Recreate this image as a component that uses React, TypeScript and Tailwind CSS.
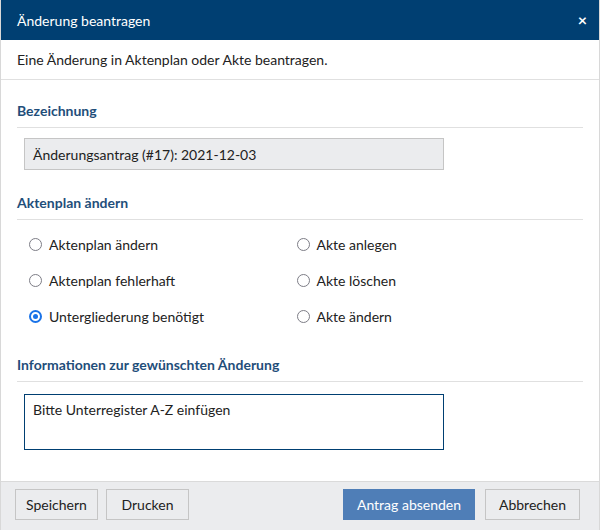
import React from "react";

const font = { fontFamily: "Lato, 'Open Sans', sans-serif" };

function Radio({ label, checked }: { label: string; checked?: boolean }) {
  return (
    <div className="flex items-center h-[20px] gap-[7px]">
      {checked ? (
        <span className="w-[13px] h-[13px] rounded-full border-[2px] border-[#1a73e8] flex items-center justify-center">
          <span className="w-[5px] h-[5px] rounded-full bg-[#1a73e8]" />
        </span>
      ) : (
        <span className="w-[13px] h-[13px] rounded-full border-[1.5px] border-[#7d7d86]" />
      )}
      <span className="text-[14px] text-[#222]">{label}</span>
    </div>
  );
}

function Btn({ children, primary, w }: { children: React.ReactNode; primary?: boolean; w: string }) {
  return (
    <button
      className={
        "h-[31px] text-[14px] border " +
        w +
        (primary
          ? " bg-[#4f7eb7] border-[#4f7eb7] text-white"
          : " bg-[#ebecee] border-[#c5c5c5] text-[#222]")
      }
    >
      {children}
    </button>
  );
}

export default function App() {
  return (
    <div style={font} className="w-[600px] h-[530px] flex flex-col bg-white border-x border-[#d8d8d8] overflow-hidden">
      <div className="h-[40px] bg-[#003f72] flex items-center justify-between pl-[16px] pr-[12px] shrink-0">
        <span className="text-white text-[14px]">Änderung beantragen</span>
        <span className="text-white text-[16px] font-bold leading-none">×</span>
      </div>
      <div className="h-[40px] border-b border-[#e0e0e0] flex items-center px-[16px] text-[14px] text-[#222] shrink-0">
        Eine Änderung in Aktenplan oder Akte beantragen.
      </div>
      <div className="flex-1 flex flex-col px-[16px] pt-[20px]">
        <div className="text-[14px] font-bold text-[#1f4e7a] h-[28px] border-b border-[#e0e0e0] w-[566px]">Bezeichnung</div>
        <div className="mt-[10px] ml-[7px] w-[420px] h-[32px] bg-[#ebecee] border border-[#c5c5c5] flex items-center px-[8px] text-[14px] text-[#222]">
          Änderungsantrag (#17): 2021-12-03
        </div>
        <div className="mt-[22px] text-[14px] font-bold text-[#1f4e7a] h-[28px] border-b border-[#e0e0e0] w-[566px]">Aktenplan ändern</div>
        <div className="grid grid-cols-2 w-[535px] ml-[12px] mt-[14px] gap-y-[16px]">
          <Radio label="Aktenplan ändern" />
          <Radio label="Akte anlegen" />
          <Radio label="Aktenplan fehlerhaft" />
          <Radio label="Akte löschen" />
          <Radio label="Untergliederung benötigt" checked />
          <Radio label="Akte ändern" />
        </div>
        <div className="mt-[28px] text-[14px] font-bold text-[#1f4e7a] h-[28px] border-b border-[#e0e0e0] w-[566px]">Informationen zur gewünschten Änderung</div>
        <div className="mt-[12px] ml-[7px] w-[420px] h-[56px] border border-[#003f72] px-[8px] pt-[4px] text-[14px] text-[#222]">
          Bitte Unterregister A-Z einfügen
        </div>
      </div>
      <div className="h-[49px] bg-[#ebecee] border-t border-[#dadada] flex items-start pt-[7px] pl-[14px] pr-[19px] shrink-0">
        <div className="flex gap-[8px]">
          <Btn w="w-[83px]">Speichern</Btn>
          <Btn w="w-[83px]">Drucken</Btn>
        </div>
        <div className="flex gap-[10px] ml-auto">
          <Btn w="w-[132px]" primary>Antrag absenden</Btn>
          <Btn w="w-[95px]">Abbrechen</Btn>
        </div>
      </div>
    </div>
  );
}
